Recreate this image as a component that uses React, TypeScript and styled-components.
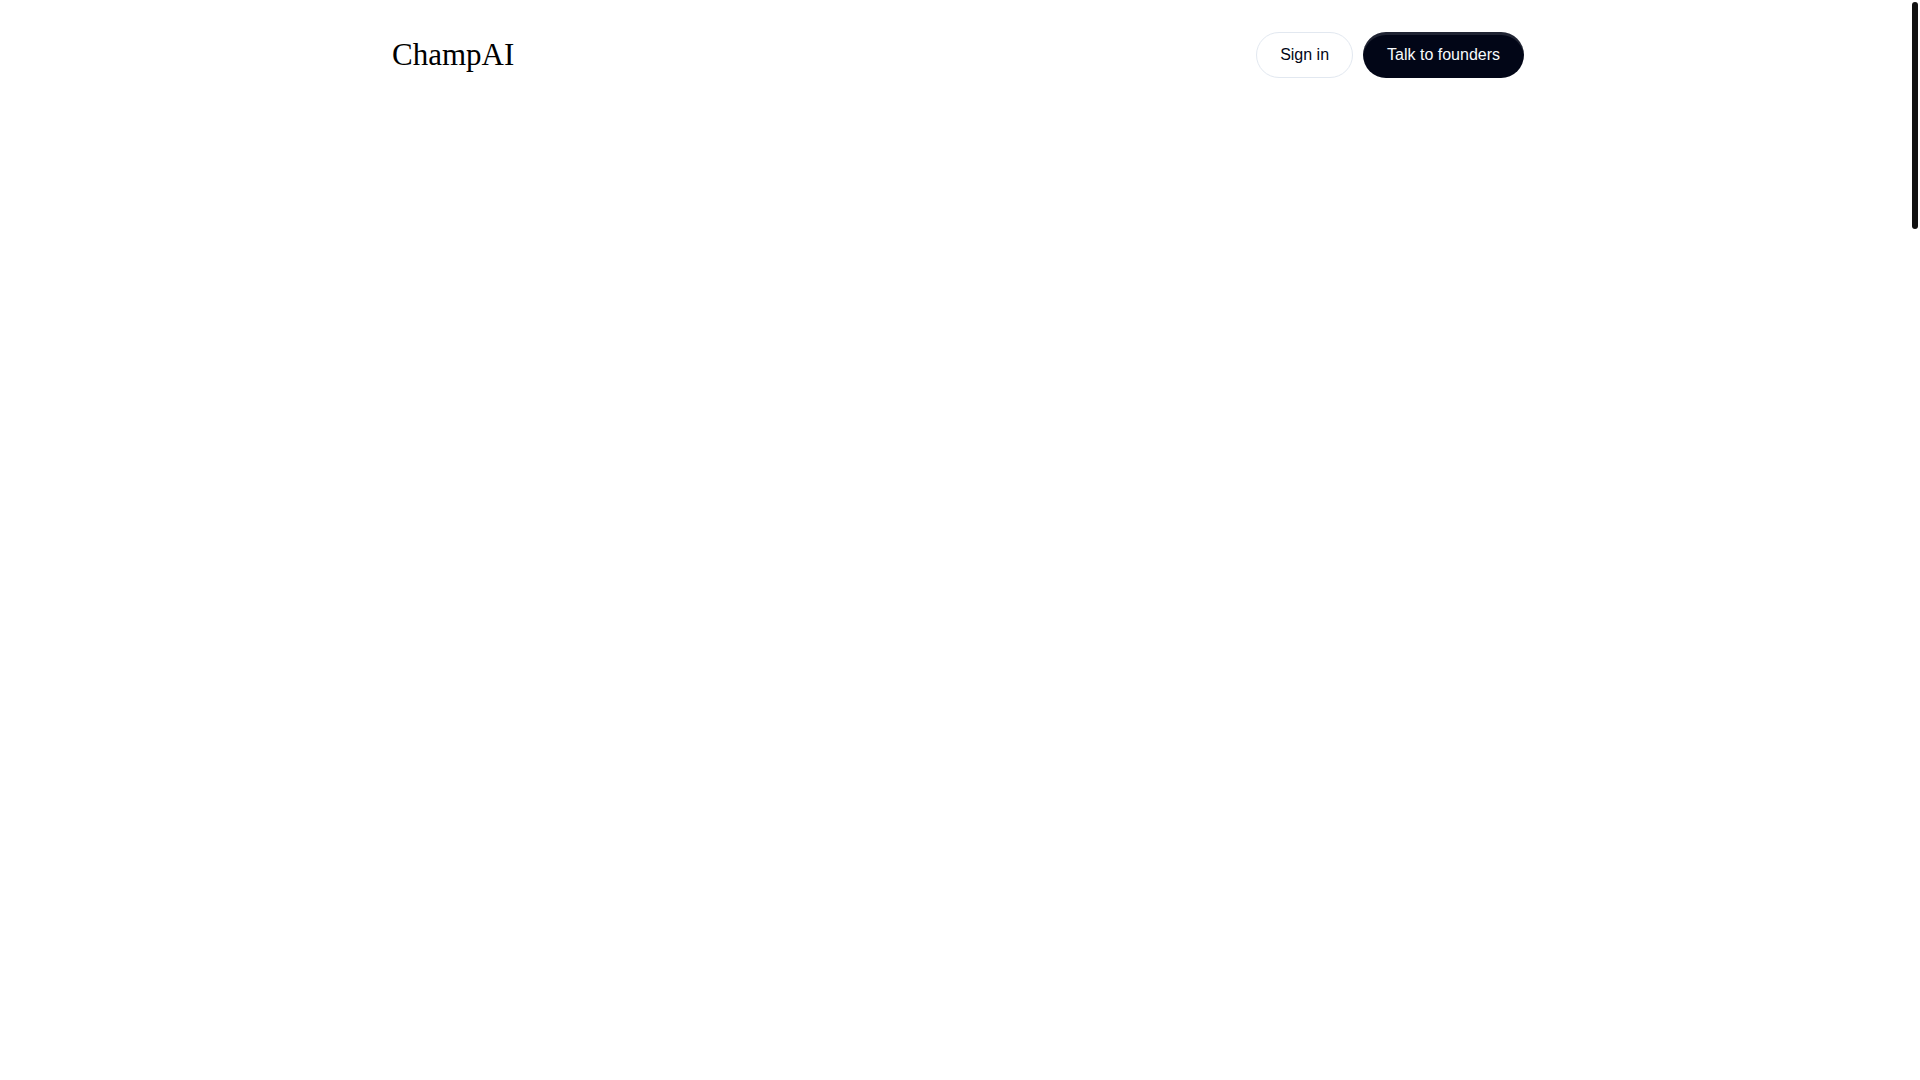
import React from "react";
import styled, { createGlobalStyle } from "styled-components";

const GlobalStyle = createGlobalStyle`
  *, *::before, *::after {
    box-sizing: border-box;
  }
  body {
    margin: 0;
    background: #ffffff;
    color: #020617;
    font-family: "Liberation Sans", Arial, sans-serif;
    font-size: 16px;
    line-height: 24px;
  }
`;

const Page = styled.div`
  min-height: 100vh;
  padding-right: 4px;
`;

const Header = styled.header`
  padding: 32px 24px;
`;

const Nav = styled.nav`
  display: flex;
  align-items: center;
  justify-content: space-between;
  width: 100%;
  max-width: 1132px;
  margin: 0 auto;
`;

const Logo = styled.a`
  color: #000000;
  font-family: "Liberation Serif", "Times New Roman", serif;
  font-size: 31px;
  line-height: 46px;
  text-decoration: none;
`;

const Actions = styled.div`
  display: flex;
  gap: 10px;
`;

const PillButton = styled.button<{ $primary?: boolean }>`
  height: 46px;
  padding: ${(p) => (p.$primary ? "0 24px" : "0 23px")};
  border: ${(p) => (p.$primary ? "0" : "1px solid #e2e8f0")};
  border-radius: 24px;
  font: inherit;
  white-space: nowrap;
  cursor: pointer;
  color: ${(p) => (p.$primary ? "#f8fafc" : "#020617")};
  background: ${(p) => (p.$primary ? "#020617" : "#ffffff")};
  box-shadow: ${(p) =>
    p.$primary ? "inset 0 3px 0 rgba(255, 255, 255, 0.12)" : "none"};
`;

const ScrollThumb = styled.div`
  position: fixed;
  top: 2px;
  right: 2px;
  width: 6px;
  height: 21vh;
  border-radius: 3px;
  background: #111111;
`;

export default function App() {
  return (
    <Page>
      <GlobalStyle />
      <Header>
        <Nav>
          <Logo href="#">ChampAI</Logo>
          <Actions>
            <PillButton type="button">Sign in</PillButton>
            <PillButton type="button" $primary>
              Talk to founders
            </PillButton>
          </Actions>
        </Nav>
      </Header>
      <ScrollThumb aria-hidden="true" />
    </Page>
  );
}
